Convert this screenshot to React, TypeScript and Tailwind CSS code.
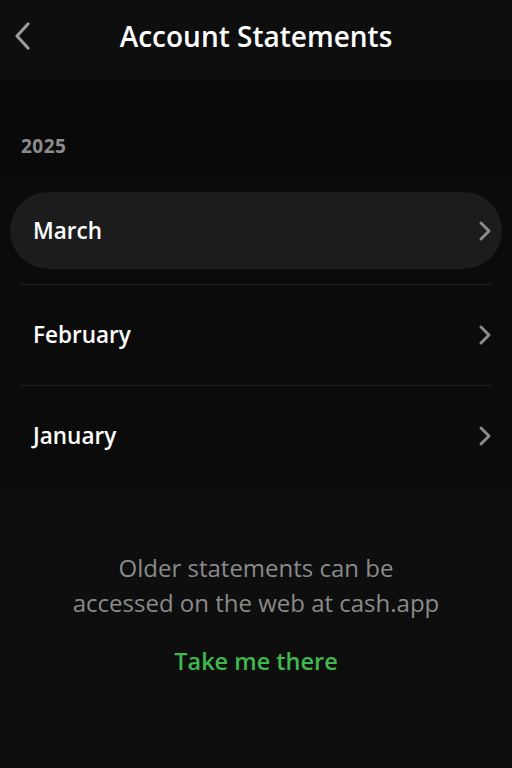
import React from "react";

const months = ["March", "February", "January"];

const Chevron = ({ className }: { className?: string }) => (
  <svg viewBox="0 0 14 22" className={className} fill="none">
    <path d="M3 3l8 8-8 8" stroke="currentColor" strokeWidth="3" strokeLinecap="round" strokeLinejoin="round" />
  </svg>
);

export default function App() {
  return (
    <div
      className="w-[512px] h-[768px] bg-[#0e0e0e] text-white overflow-hidden"
      style={{ fontFamily: '"Open Sans", "Noto Sans", sans-serif' }}
    >
      {/* Header */}
      <div className="relative h-[80px] flex items-start justify-center pt-[16px]">
        <button className="absolute left-[11px] top-[21px] text-[#9a9a9a]">
          <svg viewBox="0 0 22 30" className="w-[22px] h-[30px]" fill="none">
            <path d="M17 3L6 15l11 12" stroke="currentColor" strokeWidth="3.2" strokeLinecap="round" strokeLinejoin="round" />
          </svg>
        </button>
        <h1 className="text-[28px] font-semibold leading-[40px]">Account Statements</h1>
      </div>

      {/* Year label */}
      <div className="h-[96px] bg-[#090909] flex items-end px-[21px] pb-[16px]">
        <span className="text-[19px] font-bold tracking-[0.5px] text-[#8c8c8c] leading-[28px]">2025</span>
      </div>

      {/* Month list */}
      <div className="bg-[#0b0b0b] pt-4 h-[312px]">
        {months.map((m, i) => (
          <div key={m}>
            {i === 0 ? (
              <div className="mx-[10px] h-[77px] rounded-full bg-[#1c1c1c] flex items-center justify-between pl-[23px] pr-[10px]">
                <span className="text-[22.5px] font-semibold">{m}</span>
                <Chevron className="w-[14px] h-[22px] text-[#8a8a8a]" />
              </div>
            ) : (
              <div className="h-[100px] flex items-center justify-between pl-[33px] pr-[20px]">
                <span className="text-[22.5px] font-semibold">{m}</span>
                <Chevron className="w-[14px] h-[22px] text-[#8a8a8a]" />
              </div>
            )}
            {i < months.length - 1 && (
              <div className={`mx-[20px] h-px bg-[#1e1e1e] ${i === 0 ? "mt-[15px]" : ""}`} />
            )}
          </div>
        ))}
      </div>

      {/* Footer note */}
      <div className="flex flex-col items-center pt-[62px]">
        <p className="text-center text-[24px] font-medium leading-[35px] text-[#8a8a8a]">
          Older statements can be
          <br />
          accessed on the web at cash.app
        </p>
        <button className="mt-[25px] text-[23.5px] font-semibold text-[#3fb84d] leading-[32px]">Take me there</button>
      </div>
    </div>
  );
}
